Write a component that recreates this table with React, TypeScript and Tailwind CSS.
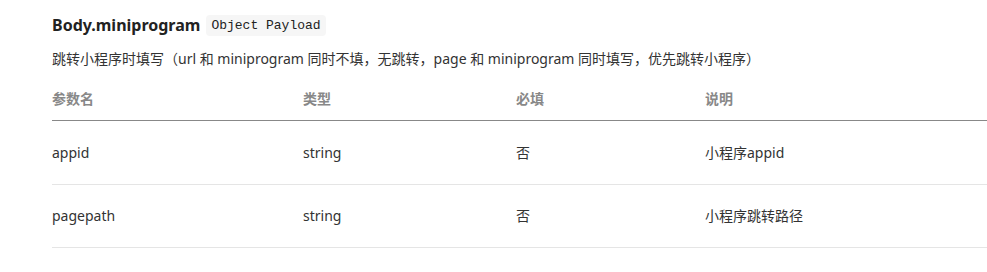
import React from 'react';

type Field = {
  name: string;
  type: string;
  required: string;
  desc: string;
};

const fields: Field[] = [
  { name: 'appid', type: 'string', required: '否', desc: '小程序appid' },
  { name: 'pagepath', type: 'string', required: '否', desc: '小程序跳转路径' },
];

const cols = 'grid grid-cols-[251px_213px_189px_1fr]';

const App = () => {
  return (
    <div
      className="w-[987px] h-[272px] bg-white overflow-hidden pl-[52px] pt-[13px] text-[#333]"
      style={{ fontFamily: '"Noto Sans", "Noto Sans CJK SC", sans-serif' }}
    >
      {/* Section heading */}
      <div className="flex items-center gap-[6px] h-[24px]">
        <h3 className="text-[16px] font-bold text-[#222] leading-6">Body.miniprogram</h3>
        <code className="bg-[#f6f6f6] rounded px-[5px] py-[2px] text-[13px] leading-[17px] text-[#222] font-['Liberation_Mono',monospace]">
          Object Payload
        </code>
      </div>

      <p className="mt-[10px] text-[14px] leading-[24px] text-[#333]">
        跳转小程序时填写（url 和 miniprogram 同时不填，无跳转，page 和 miniprogram 同时填写，优先跳转小程序）
      </p>

      {/* Params table */}
      <div className="mt-[6px]">
        <div className={`${cols} h-[44px] items-center border-b border-[#888] text-[14px] font-bold text-[#888]`}>
          <div>参数名</div>
          <div>类型</div>
          <div>必填</div>
          <div>说明</div>
        </div>
        {fields.map(f => (
          <div
            key={f.name}
            className={`${cols} h-[63.5px] items-center border-b border-[#e5e5e5] text-[14px] text-[#333]`}
          >
            <div>{f.name}</div>
            <div>{f.type}</div>
            <div>{f.required}</div>
            <div>{f.desc}</div>
          </div>
        ))}
      </div>
    </div>
  );
};

export default App;
